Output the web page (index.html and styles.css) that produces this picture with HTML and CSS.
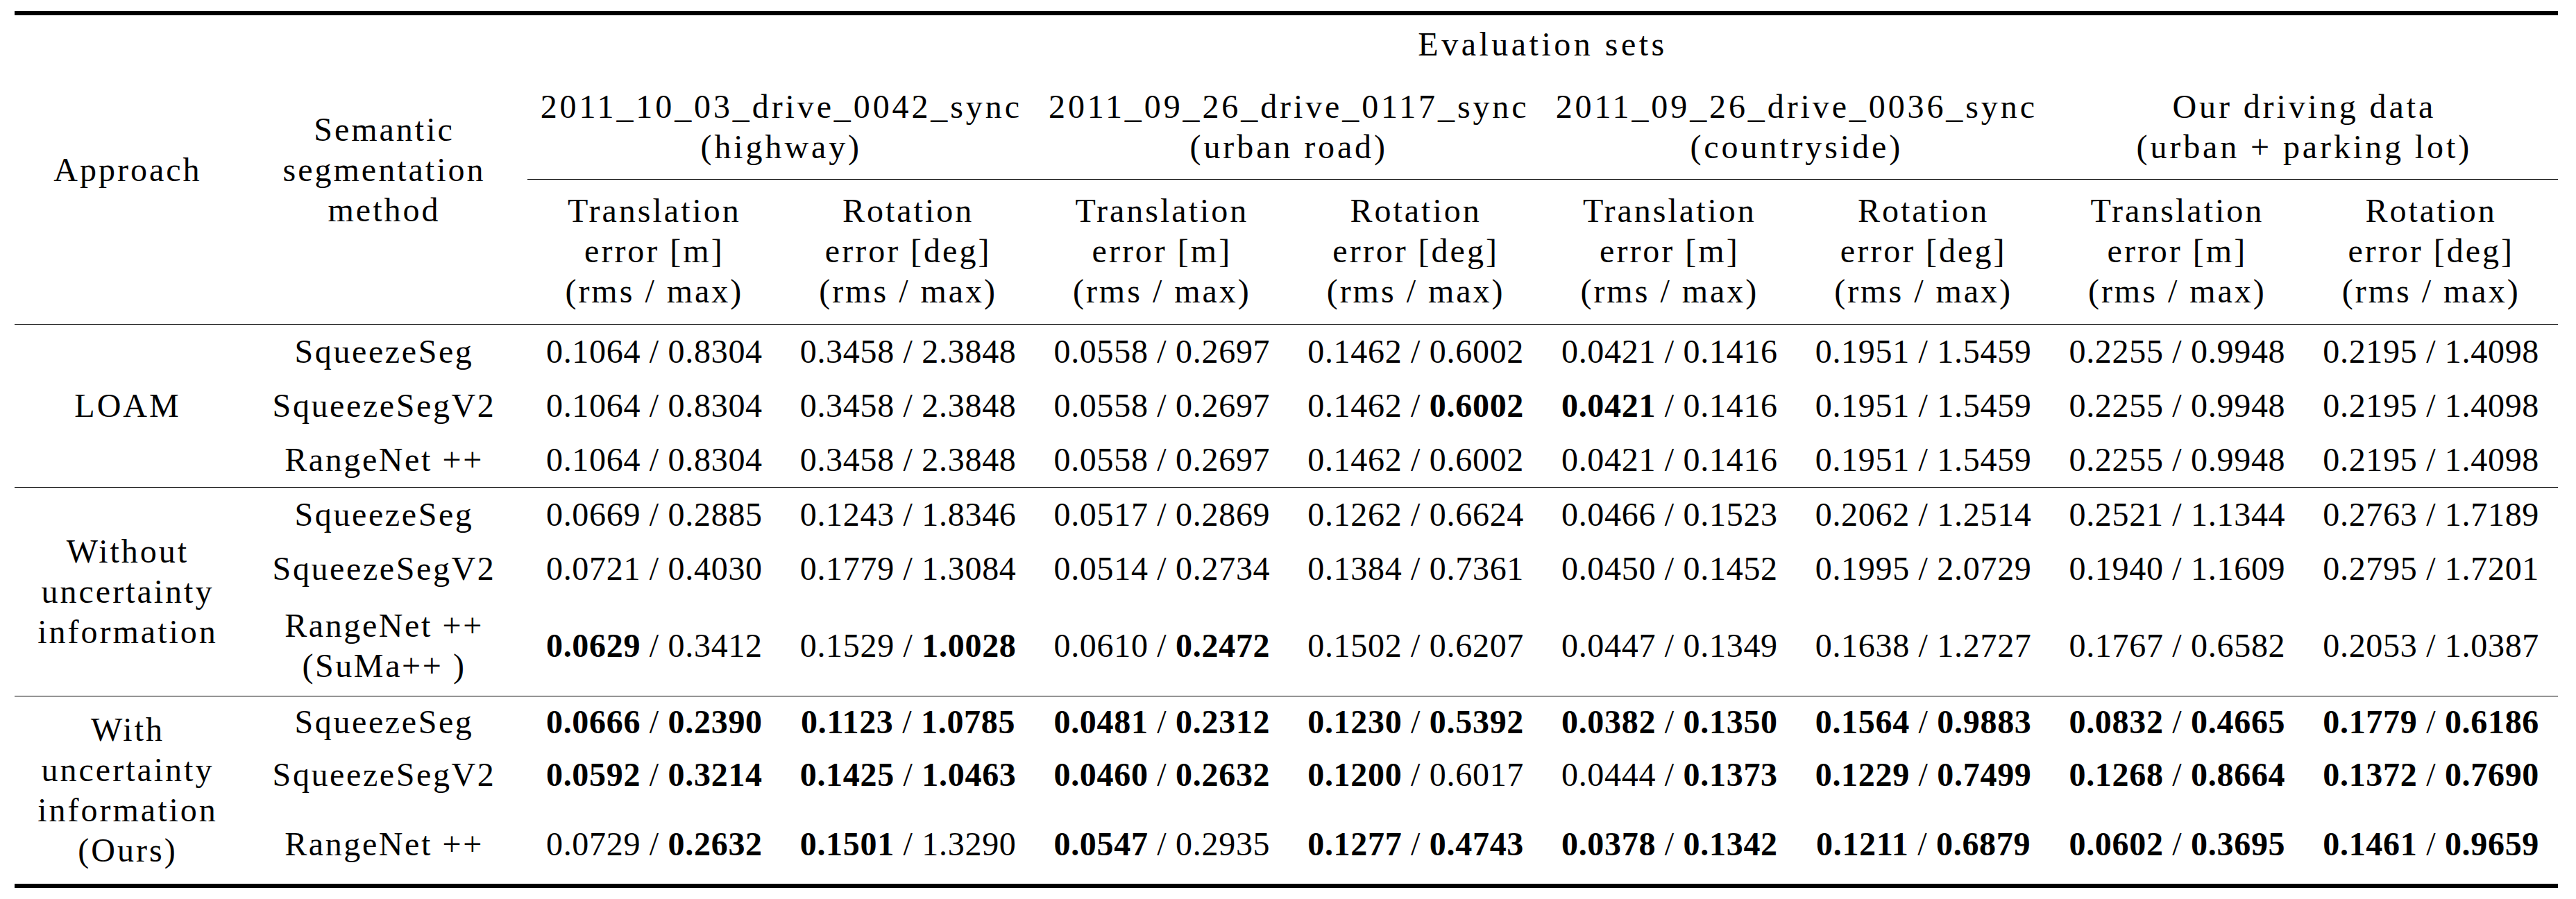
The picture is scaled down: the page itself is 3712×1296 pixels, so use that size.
FILE: index.html
```html
<!DOCTYPE html>
<html>
<head>
<meta charset="utf-8">
<title>Evaluation results</title>
<link rel="stylesheet" href="styles.css">
</head>
<body>
<table class="results">
  <colgroup>
    <col class="c-app">
    <col class="c-sem">
    <col class="c-val" span="8">
  </colgroup>
  <thead>
    <tr class="r-eval">
      <th class="h-app" rowspan="3">Approach</th>
      <th class="h-sem" rowspan="3">Semantic<br>segmentation<br>method</th>
      <th class="h-eval" colspan="8">Evaluation sets</th>
    </tr>
    <tr class="r-sets">
      <th colspan="2">2011_10_03_drive_0042_sync<br>(highway)</th>
      <th colspan="2">2011_09_26_drive_0117_sync<br>(urban road)</th>
      <th colspan="2">2011_09_26_drive_0036_sync<br>(countryside)</th>
      <th colspan="2">Our driving data<br>(urban + parking lot)</th>
    </tr>
    <tr class="r-sub">
      <th>Translation<br>error [m]<br>(rms / max)</th>
      <th>Rotation<br>error [deg]<br>(rms / max)</th>
      <th>Translation<br>error [m]<br>(rms / max)</th>
      <th>Rotation<br>error [deg]<br>(rms / max)</th>
      <th>Translation<br>error [m]<br>(rms / max)</th>
      <th>Rotation<br>error [deg]<br>(rms / max)</th>
      <th>Translation<br>error [m]<br>(rms / max)</th>
      <th>Rotation<br>error [deg]<br>(rms / max)</th>
    </tr>
  </thead>
  <tbody class="g g-loam">
    <tr>
      <th class="app" rowspan="3">LOAM</th>
      <td class="sem">SqueezeSeg</td>
      <td>0.1064 / 0.8304</td><td>0.3458 / 2.3848</td><td>0.0558 / 0.2697</td><td>0.1462 / 0.6002</td>
      <td>0.0421 / 0.1416</td><td>0.1951 / 1.5459</td><td>0.2255 / 0.9948</td><td>0.2195 / 1.4098</td>
    </tr>
    <tr>
      <td class="sem">SqueezeSegV2</td>
      <td>0.1064 / 0.8304</td><td>0.3458 / 2.3848</td><td>0.0558 / 0.2697</td><td>0.1462 / <b>0.6002</b></td>
      <td><b>0.0421</b> / 0.1416</td><td>0.1951 / 1.5459</td><td>0.2255 / 0.9948</td><td>0.2195 / 1.4098</td>
    </tr>
    <tr class="last">
      <td class="sem">RangeNet ++</td>
      <td>0.1064 / 0.8304</td><td>0.3458 / 2.3848</td><td>0.0558 / 0.2697</td><td>0.1462 / 0.6002</td>
      <td>0.0421 / 0.1416</td><td>0.1951 / 1.5459</td><td>0.2255 / 0.9948</td><td>0.2195 / 1.4098</td>
    </tr>
  </tbody>
  <tbody class="g g-without">
    <tr>
      <th class="app" rowspan="3">Without<br>uncertainty<br>information</th>
      <td class="sem">SqueezeSeg</td>
      <td>0.0669 / 0.2885</td><td>0.1243 / 1.8346</td><td>0.0517 / 0.2869</td><td>0.1262 / 0.6624</td>
      <td>0.0466 / 0.1523</td><td>0.2062 / 1.2514</td><td>0.2521 / 1.1344</td><td>0.2763 / 1.7189</td>
    </tr>
    <tr>
      <td class="sem">SqueezeSegV2</td>
      <td>0.0721 / 0.4030</td><td>0.1779 / 1.3084</td><td>0.0514 / 0.2734</td><td>0.1384 / 0.7361</td>
      <td>0.0450 / 0.1452</td><td>0.1995 / 2.0729</td><td>0.1940 / 1.1609</td><td>0.2795 / 1.7201</td>
    </tr>
    <tr class="last tall">
      <td class="sem">RangeNet ++<br>(SuMa++ )</td>
      <td><b>0.0629</b> / 0.3412</td><td>0.1529 / <b>1.0028</b></td><td>0.0610 / <b>0.2472</b></td><td>0.1502 / 0.6207</td>
      <td>0.0447 / 0.1349</td><td>0.1638 / 1.2727</td><td>0.1767 / 0.6582</td><td>0.2053 / 1.0387</td>
    </tr>
  </tbody>
  <tbody class="g g-with">
    <tr>
      <th class="app" rowspan="3">With<br>uncertainty<br>information<br>(Ours)</th>
      <td class="sem">SqueezeSeg</td>
      <td><b>0.0666</b> / <b>0.2390</b></td><td><b>0.1123</b> / <b>1.0785</b></td><td><b>0.0481</b> / <b>0.2312</b></td><td><b>0.1230</b> / <b>0.5392</b></td>
      <td><b>0.0382</b> / <b>0.1350</b></td><td><b>0.1564</b> / <b>0.9883</b></td><td><b>0.0832</b> / <b>0.4665</b></td><td><b>0.1779</b> / <b>0.6186</b></td>
    </tr>
    <tr>
      <td class="sem">SqueezeSegV2</td>
      <td><b>0.0592</b> / <b>0.3214</b></td><td><b>0.1425</b> / <b>1.0463</b></td><td><b>0.0460</b> / <b>0.2632</b></td><td><b>0.1200</b> / 0.6017</td>
      <td>0.0444 / <b>0.1373</b></td><td><b>0.1229</b> / <b>0.7499</b></td><td><b>0.1268</b> / <b>0.8664</b></td><td><b>0.1372</b> / <b>0.7690</b></td>
    </tr>
    <tr class="last end">
      <td class="sem">RangeNet ++</td>
      <td>0.0729 / <b>0.2632</b></td><td><b>0.1501</b> / 1.3290</td><td><b>0.0547</b> / 0.2935</td><td><b>0.1277</b> / <b>0.4743</b></td>
      <td><b>0.0378</b> / <b>0.1342</b></td><td><b>0.1211</b> / <b>0.6879</b></td><td><b>0.0602</b> / <b>0.3695</b></td><td><b>0.1461</b> / <b>0.9659</b></td>
    </tr>
  </tbody>
</table>
</body>
</html>
```

FILE: styles.css
```css
html, body {
  margin: 0;
  padding: 0;
  background: #ffffff;
}

body {
  font-family: "Liberation Serif", "Times New Roman", serif;
  color: #000000;
  font-size: 48px;
  line-height: 58px;
}

.results {
  border-collapse: separate;
  border-spacing: 0;
  table-layout: fixed;
  width: 3665px;
  margin: 16px 0 0 21px;
}

.c-app { width: 326px; }
.c-sem { width: 413px; }
.c-val { width: 365.75px; }

.results th,
.results td {
  padding: 0;
  text-align: center;
  vertical-align: middle;
  white-space: nowrap;
  font-weight: normal;
}

.results b {
  font-weight: bold;
}

/* header */
.results th {
  letter-spacing: 3px;
}

.r-eval th {
  border-top: 6px solid #000;
}

.r-eval .h-eval {
  padding: 13px 0 16px;
  vertical-align: top;
  letter-spacing: 4.5px;
}

.h-app,
.h-sem {
  border-bottom: 1px solid #000;
}

.r-sets th {
  padding: 16px 0 17px;
  border-bottom: 1px solid #000;
  vertical-align: top;
  letter-spacing: 3.9px;
}

.r-sub th {
  padding: 16px 0 18px;
  border-bottom: 1px solid #000;
  vertical-align: top;
}

/* body */
.results td {
  padding: 10px 0;
  letter-spacing: 0.7px;
}

.results td.sem {
  letter-spacing: 2.6px;
}

.g-with td {
  padding: 8px 0 10px;
}

.results tr.tall td {
  padding: 14px 0;
}

.results tr.end td {
  padding: 32px 0 28px;
}

.g .app {
  border-bottom: 1px solid #000;
}

.results tr.last td {
  border-bottom: 1px solid #000;
}

.g-with .app,
.results tr.end td {
  border-bottom: 6px solid #000;
}
```
